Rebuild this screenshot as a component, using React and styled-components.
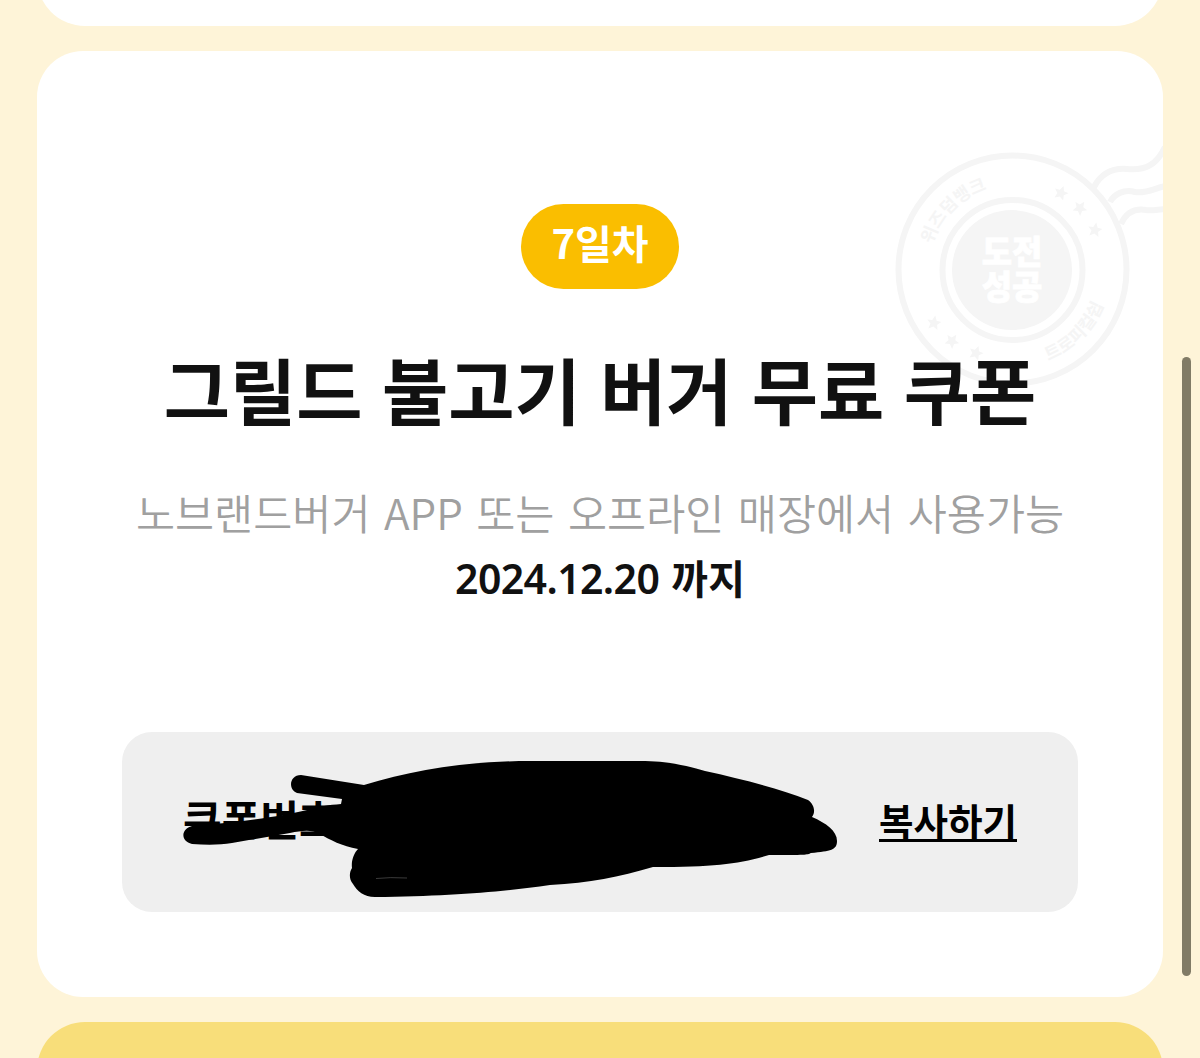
import styled, { createGlobalStyle } from "styled-components";

const stars = [
  [1061, 193, 20],
  [1080, 208, 35],
  [1095, 230, 10],
  [934, 323, 10],
  [952, 341, 35],
  [976, 353, 20],
];

const StampImage = () => (
  <Stamp viewBox="886 140 277 260" aria-hidden="true">
    <defs>
      <path id="arcTop" d="M 928.5 269.5 A 84 84 0 0 1 1096.5 269.5" />
      <path id="arcBottom" d="M 914.5 269.5 A 98 98 0 0 0 1110.5 269.5" />
    </defs>
    <g fill="none" stroke="#f5f5f5" strokeWidth="6">
      <circle cx="1012.5" cy="269.5" r="114" />
      <circle cx="1012.5" cy="270" r="70" />
      <path d="M1094 187 C1102 172 1114 168 1127 169 C1146 171 1157 164 1165 147" />
      <path d="M1110 202 C1114 194 1124 189 1135 192 C1148 194 1156 187 1167 186" />
      <path d="M1121 224 C1126 213 1134 208 1146 210 C1153 211 1159 209 1167 209" />
    </g>
    <circle cx="1012" cy="270" r="60" fill="#f5f5f5" />
    {stars.map(([x, y, r]) => (
      <path
        key={x}
        transform={`translate(${x} ${y}) rotate(${r})`}
        d="M0-7.5 2.2-2.6 7.2-2.3 3.4 1.2 4.6 6.4 0 3.6-4.6 6.4-3.4 1.2-7.2-2.3-2.2-2.6Z"
        fill="#f5f5f5"
      />
    ))}
    <RingText>
      <textPath href="#arcTop" startOffset="25%" textAnchor="middle">
        위즈덤뱅크
      </textPath>
    </RingText>
    <RingText>
      <textPath href="#arcBottom" startOffset="75%" textAnchor="middle">
        트로피컬쉽
      </textPath>
    </RingText>
    <SealText>
      <tspan x="1012" y="264">
        도전
      </tspan>
      <tspan x="1012" y="299">
        성공
      </tspan>
    </SealText>
  </Stamp>
);

const App = () => {
  return (
    <Page>
      <GlobalStyle />
      <PrevCard />
      <Card>
        <StampImage />
        <Badge>7일차</Badge>
        <Title>그릴드 불고기 버거 무료 쿠폰</Title>
        <Description>노브랜드버거 APP 또는 오프라인 매장에서 사용가능</Description>
        <Expiry>
          <DateText>2024.12.20</DateText> 까지
        </Expiry>
        <CodeBox>
          <CodeLabel>쿠폰번호</CodeLabel>
          <CopyButton>복사하기</CopyButton>
          <Scribble viewBox="122 732 956 180" aria-hidden="true">
            <path d="M301 775 L364 785 C412 770 468 761 530 761 H640 C672 761 690 767 705 771 C742 779 780 789 808 800 C814 804 816 812 812 817 C826 823 837 831 837 841 C837 850 831 851 811 853 C807 855 806 855 769 855 C738 864 716 867 653 867 C619 877 590 883 550 885 C501 892 450 896 375 897 C364 897 357 891 353 884 C349 879 349 873 352 868 C351 861 354 853 358 849 C342 846 330 840 320 834 C310 829 302 831 290 833 L232 843 C220 845 207 845 192 844 C180 841 181 829 192 826 C237 822 280 817 307 810 C319 806 329 805 341 804 L342 799 L297 793 C288 790 289 775 301 775 Z" />
            <path d="M376 878.5 Q390 877 407 878" stroke="#555" fill="none" strokeWidth="0.7" />
          </Scribble>
        </CodeBox>
      </Card>
      <NextCard />
      <ScrollThumb />
    </Page>
  );
};

const GlobalStyle = createGlobalStyle`
  body {
    margin: 0;
    background-color: #fef4d8;
  }
`;

const Page = styled.div`
  position: relative;
  box-sizing: border-box;
  display: flex;
  flex-direction: column;
  gap: 25px;
  width: 1200px;
  height: 1058px;
  padding: 0 37px;
  overflow: hidden;
  background-color: #fef4d8;
  font-family: "Noto Sans CJK KR", sans-serif;
  color: #111;
`;

const PrevCard = styled.div`
  flex: none;
  height: 100px;
  margin-top: -74px;
  border-radius: 48px;
  background-color: #fff;
`;

const NextCard = styled(PrevCard)`
  margin-top: 0;
  background-color: #f8de7a;
`;

const Card = styled.section`
  position: relative;
  flex: none;
  box-sizing: border-box;
  display: flex;
  flex-direction: column;
  align-items: center;
  height: 946px;
  padding: 153px 85px 0;
  border-radius: 46px;
  overflow: hidden;
  background-color: #fff;
`;

const Stamp = styled.svg`
  position: absolute;
  top: 89px;
  right: 0;
  width: 277px;
  height: 260px;
`;

const RingText = styled.text`
  font-size: 17.5px;
  font-weight: 700;
  fill: #f5f5f5;
`;

const SealText = styled.text`
  font-size: 33px;
  font-weight: 900;
  text-anchor: middle;
  fill: #fff;
  stroke: #fff;
  stroke-width: 0.8px;
`;

const Badge = styled.span`
  position: relative;
  box-sizing: border-box;
  width: 158px;
  height: 85px;
  border-radius: 43px;
  background-color: #fabe00;
  color: #fff;
  font-size: 40px;
  font-weight: 700;
  line-height: 76px;
  text-align: center;
`;

const Title = styled.h1`
  position: relative;
  margin: 47px 0 0;
  font-size: 72px;
  font-weight: 700;
  line-height: 104px;
  word-spacing: 3px;
  white-space: nowrap;
`;

const Description = styled.p`
  margin: 40px 0 0;
  font-size: 42.5px;
  font-weight: 350;
  line-height: 64px;
  word-spacing: 4px;
  color: #a0a0a0;
  white-space: nowrap;
`;

const Expiry = styled.p`
  margin: 0;
  font-size: 40px;
  font-weight: 700;
  line-height: 66px;
  word-spacing: 3px;
  white-space: nowrap;
`;

const DateText = styled.span`
  font-family: "Noto Sans", sans-serif;
  font-size: 41px;
  font-weight: 600;
  letter-spacing: -0.6px;
`;

const CodeBox = styled.div`
  position: relative;
  box-sizing: border-box;
  display: flex;
  align-items: center;
  justify-content: space-between;
  width: 956px;
  height: 180px;
  margin-top: 121px;
  padding: 0 61px;
  border-radius: 30px;
  background-color: #efefef;
  color: #000;
`;

const CodeLabel = styled.span`
  padding-bottom: 9px;
  font-size: 42px;
  font-weight: 700;
`;

const CopyButton = styled.button`
  margin-bottom: 2px;
  padding: 0;
  border: 0;
  border-bottom: 3px solid #000;
  background: none;
  color: #000;
  font-family: inherit;
  font-size: 37.5px;
  font-weight: 700;
  line-height: 38px;
`;

const Scribble = styled.svg`
  position: absolute;
  inset: 0;
  width: 956px;
  height: 180px;
`;

const ScrollThumb = styled.div`
  position: absolute;
  top: 357px;
  right: 9px;
  width: 9px;
  height: 619px;
  border-radius: 5px;
  background-color: #817b66;
`;

export default App;
